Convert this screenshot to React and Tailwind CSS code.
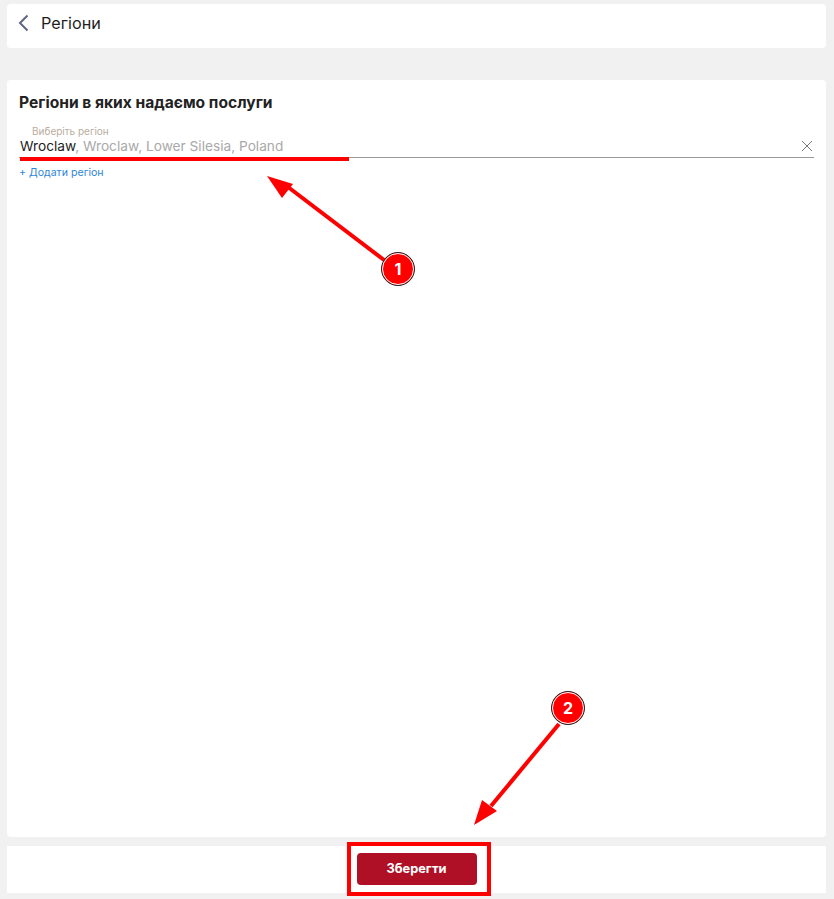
const font = { fontFamily: "Inter, 'Noto Sans', sans-serif" };

export default function App() {
  return (
    <div className="relative h-[899px] w-[834px] overflow-hidden bg-[#f1f1f1] pl-[7px] pr-[8px] pt-1 font-['Inter',sans-serif]">
      <div className="flex h-11 items-center gap-[11px] rounded bg-white pb-[6px] pl-[10px]">
        <svg width="13" height="18" viewBox="0 0 13 18" fill="none">
          <path d="M10.5 1.5 L3 9 L10.5 16.5" stroke="#5f6680" strokeWidth="2" />
        </svg>
        <span className="text-[16.2px] text-[#1e1e1e]">Регіони</span>
      </div>

      <div className="mt-8 h-[757px] rounded-sm bg-white px-3 pt-[14px]">
        <h1 className="text-[15.6px] font-bold leading-[18px] text-[#222222]">Регіони в яких надаємо послуги</h1>
        <div className="mt-[14px] border-b border-[#9a9a9a] pl-px">
          <div className="pl-3 text-[10px] leading-[11px] text-[#b9ad9c]">Виберіть регіон</div>
          <div className="flex h-5 items-start justify-between text-[13.7px] leading-[18px] text-[#a9a9a9]">
            <span>
              <span className="text-[#222222]">Wroclaw</span>, Wroclaw, Lower Silesia, Poland
            </span>
            <svg width="12" height="12" viewBox="0 0 12 12" fill="none" className="mr-px mt-[3px]">
              <path d="M1 1 L11 11 M11 1 L1 11" stroke="#777777" strokeWidth="1" />
            </svg>
          </div>
        </div>
        <div className="mt-2 text-[10.6px] leading-[13px] text-[#2f86d6]">+ Додати регіон</div>
      </div>

      <div className="mt-[9px] flex h-[47px] items-start justify-center bg-white pt-[7px]">
        <button className="h-8 w-[120px] rounded-sm bg-[#b01025] text-[12.8px] font-bold text-white">Зберегти</button>
      </div>

      {/* annotations on top of the screenshot */}
      <svg className="absolute left-0 top-0" width="834" height="899" viewBox="0 0 834 899" fill="none" style={font}>
        <rect x="20" y="157" width="329" height="4" fill="#ff0000" />
        <path d="M384 260 L288 187" stroke="#ff0000" strokeWidth="4" />
        <path d="M267 176 L293 184 L282 198 Z" fill="#ff0000" />
        <circle cx="398" cy="269" r="16.5" fill="#ff0000" stroke="#222222" strokeWidth="1" />
        <circle cx="398" cy="269" r="15.5" stroke="#ffffff" strokeWidth="1" />
        <text x="398" y="275" textAnchor="middle" fontSize="16" fontWeight="700" fill="#ffffff">1</text>

        <path d="M559 724 L491 806" stroke="#ff0000" strokeWidth="4" />
        <path d="M474 825 L482 800 L497 811 Z" fill="#ff0000" />
        <circle cx="568" cy="708" r="16.5" fill="#ff0000" stroke="#222222" strokeWidth="1" />
        <circle cx="568" cy="708" r="15.5" stroke="#ffffff" strokeWidth="1" />
        <text x="568" y="714" textAnchor="middle" fontSize="16" fontWeight="700" fill="#ffffff">2</text>

        <rect x="349" y="844" width="140" height="50" stroke="#ff0000" strokeWidth="4" />
      </svg>
    </div>
  );
}
